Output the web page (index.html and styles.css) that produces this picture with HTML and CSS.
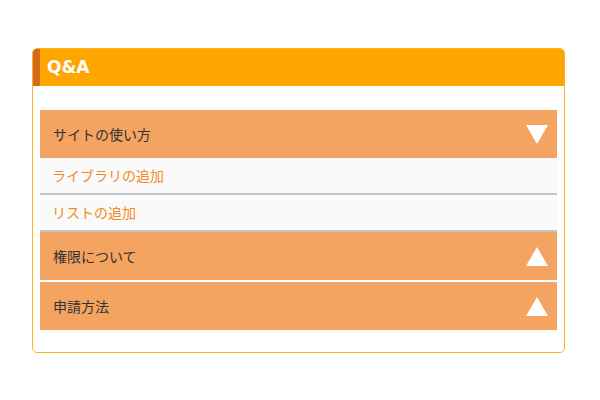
FILE: index.html
```html
<!DOCTYPE html>
<html lang="ja">
<head>
  <meta charset="UTF-8">
  <title>Q&amp;A</title>
  <link rel="stylesheet" href="styles.css">
</head>
<body>
  <div class="qa">
    <div class="qa-title">Q&amp;A</div>
    <div class="qa-body">
      <!-- open section -->
      <div class="qa-head">
        <span>サイトの使い方</span>
        <svg class="arrow" width="22" height="19" viewBox="0 0 22 19"><polygon points="0,0 22,0 11,19" fill="#fff"/></svg>
      </div>
      <a class="qa-link">ライブラリの追加</a>
      <a class="qa-link">リストの追加</a>

      <!-- closed sections -->
      <div class="qa-head">
        <span>権限について</span>
        <svg class="arrow" width="22" height="19" viewBox="0 0 22 19"><polygon points="11,0 22,19 0,19" fill="#fff"/></svg>
      </div>
      <div class="qa-head gap">
        <span>申請方法</span>
        <svg class="arrow" width="22" height="19" viewBox="0 0 22 19"><polygon points="11,0 22,19 0,19" fill="#fff"/></svg>
      </div>
    </div>
  </div>
</body>
</html>
```

FILE: styles.css
```css
body {
  margin: 0;
  padding: 48px 35px 0 32px;
  background: #fff;
  font-family: "Noto Sans CJK JP", "Noto Sans", sans-serif;
}

.qa {
  border: 1.5px solid #ffb020;
  border-radius: 5px;
  overflow: hidden;
}

.qa-title {
  height: 37px;
  line-height: 37px;
  background-color: #ffa500;
  border-left: 7px solid #d2691e;
  padding-left: 7px;
  color: #fff;
  font-family: "DejaVu Sans", Verdana, sans-serif;
  font-weight: bold;
  font-size: 17px;
}

.qa-body {
  padding: 24px 7px 22px;
}

.qa-head {
  display: flex;
  align-items: center;
  justify-content: space-between;
  height: 48px;
  padding: 0 9px 0 13px;
  background-color: #f4a460;
  color: #333;
  font-size: 14px;
}
.qa-head.gap {
  margin-top: 2px;
}

.qa-link {
  display: block;
  height: 35px;
  line-height: 35px;
  padding-left: 12px;
  background-color: #fafafa;
  border-bottom: 2px solid #c4c4c4;
  color: #f28a22;
  font-size: 14px;
}
```
